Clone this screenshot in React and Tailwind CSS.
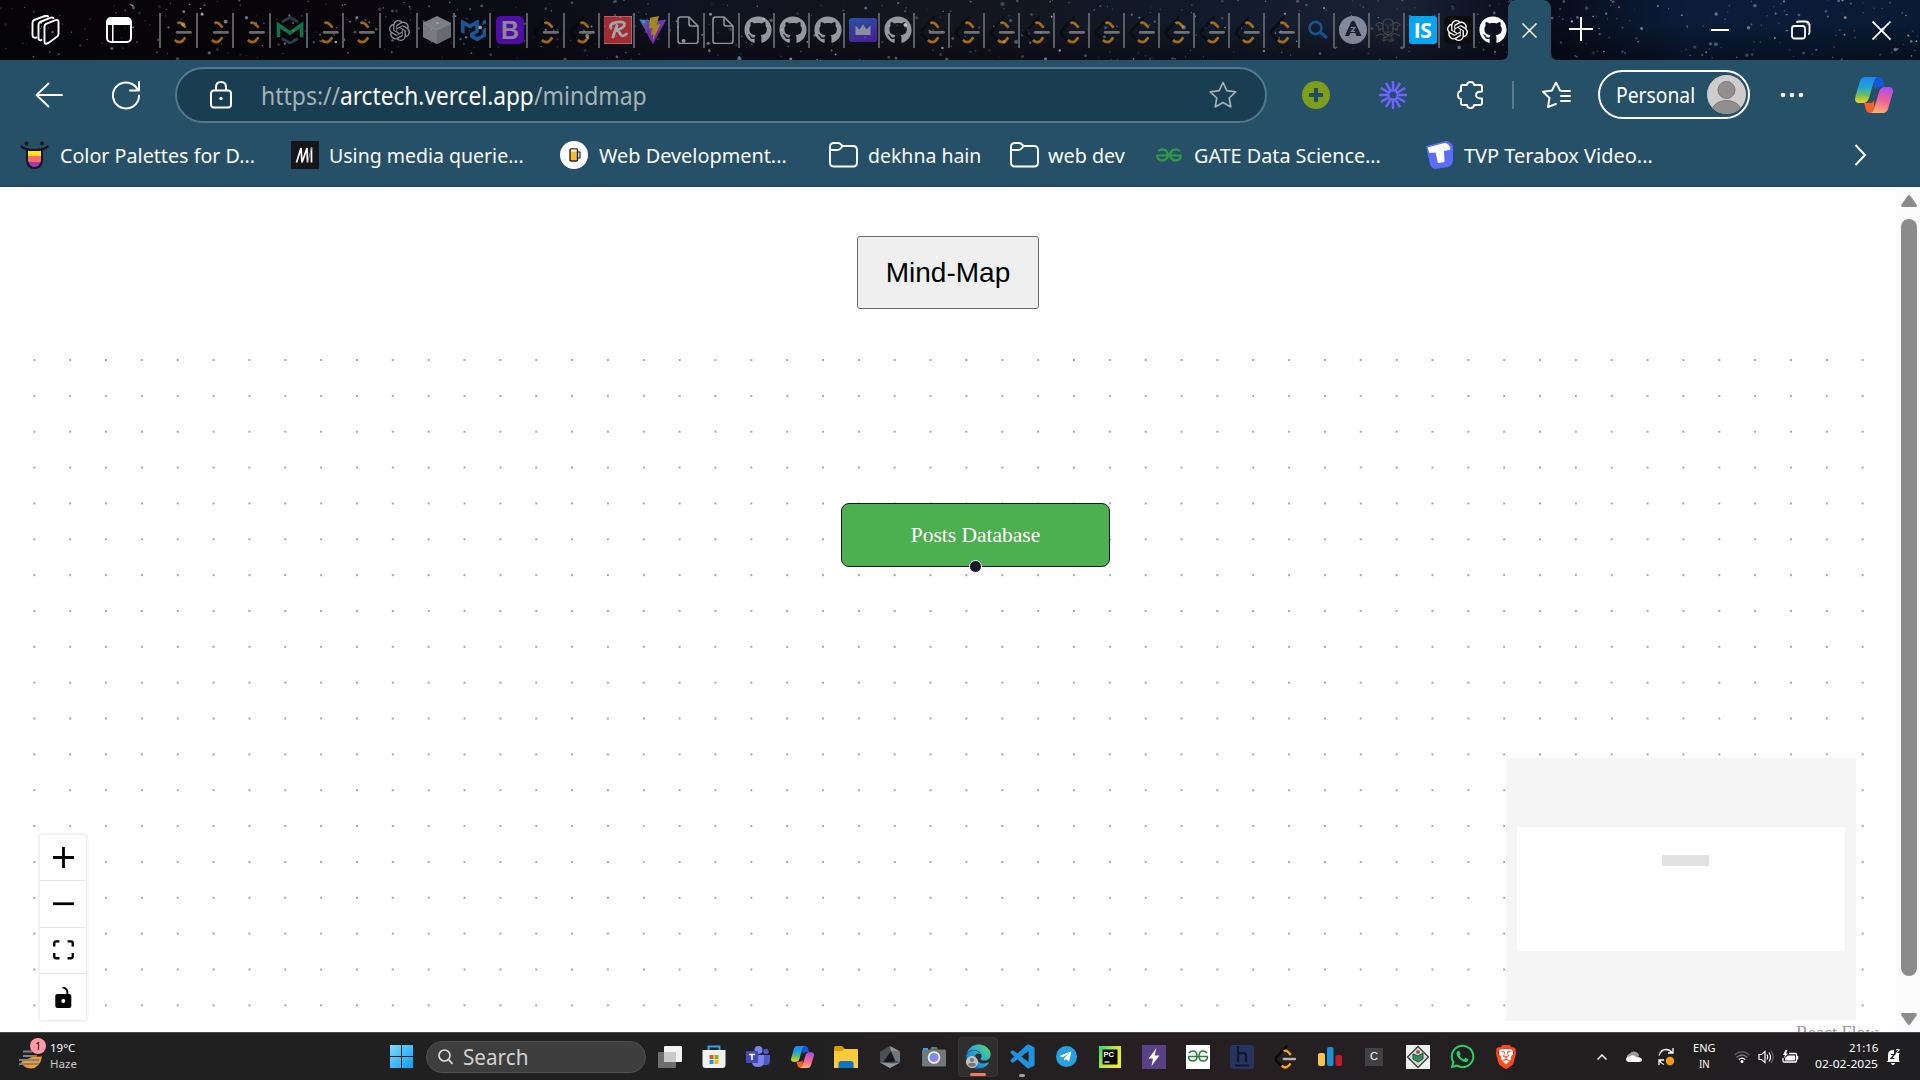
import { useLayoutEffect, useRef } from 'react';
import { SiOpenai, SiMailtrap, SiMui, SiGeeksforgeeks } from 'react-icons/si';
import { FaGithub, FaWhatsapp, FaTelegramPlane, FaEdge } from 'react-icons/fa';
import { FaBrave } from 'react-icons/fa6';
import { BiLogoVisualStudio } from 'react-icons/bi';

/* One line of text, condensed or widened so that it fills its box exactly. */
function Fit({ className, children }) {
  const ref = useRef(null);
  useLayoutEffect(() => {
    const box = ref.current;
    const span = box.firstChild;
    span.style.transform = `scaleX(${box.offsetWidth / span.offsetWidth})`;
  }, [children]);
  return (
    <span ref={ref} className={`block shrink-0 whitespace-pre ${className}`}>
      <span className="inline-block origin-left">{children}</span>
    </span>
  );
}

/* ---------- star field behind the tab strip ---------- */
function makeStars() {
  let s = 77;
  const rnd = () => {
    s = (s * 16807) % 2147483647;
    return s / 2147483647;
  };
  const tints = ['#8fa5cf', '#c9b9c4', '#7c92c4', '#b88f86', '#6d8fae', '#d9deea'];
  return Array.from({ length: 620 }, () => ({
    x: rnd() * 1920,
    y: rnd() * 60,
    r: 0.5 + rnd() * rnd() * 1.7,
    o: 0.18 + rnd() * 0.6,
    c: tints[Math.floor(rnd() * tints.length)],
  }));
}
const STARS = makeStars();

function Sky() {
  return (
    <svg className="absolute inset-0" width="1920" height="60" viewBox="0 0 1920 60">
      <defs>
        <linearGradient id="sky">
          <stop offset="0" stopColor="#050305" />
          <stop offset=".18" stopColor="#08060b" />
          <stop offset=".35" stopColor="#0f1220" />
          <stop offset=".5" stopColor="#14161f" />
          <stop offset=".62" stopColor="#101a29" />
          <stop offset=".73" stopColor="#192236" />
          <stop offset=".8" stopColor="#080b18" />
          <stop offset=".88" stopColor="#0b1d3a" />
          <stop offset="1" stopColor="#091a33" />
        </linearGradient>
        <linearGradient id="skyShade" x1="0" x2="0" y1="0" y2="1">
          <stop offset=".4" stopColor="#000" stopOpacity="0" />
          <stop offset="1" stopColor="#04040a" stopOpacity=".5" />
        </linearGradient>
      </defs>
      <rect width="1920" height="60" fill="url(#sky)" />
      <rect width="1920" height="60" fill="url(#skyShade)" />
      {STARS.map((s, i) => (
        <circle key={i} cx={s.x} cy={s.y} r={s.r} fill={s.c} opacity={s.o} />
      ))}
    </svg>
  );
}

/* ---------- favicons ---------- */
const Leet = ({ size = 28, dark = '#05070b', bar = '#a9a9a9' }) => (
  <svg width={size} height={size} viewBox="0 0 24 24" fill="none" strokeLinecap="round" strokeWidth="2.3">
    <path d="M12.6 1.4 2.4 12.4q-1.400 1.700 0 3.400l4.800 5" stroke={dark} />
    <path d="M9.800 6.300q2-1.400 4 .4l3 3.200" stroke="#ffa116" strokeLinecap="butt" />
    <path d="M7.600 20.600q3.600 3.400 6.600.6l2.400-2.800" stroke="#ffa116" strokeLinecap="butt" />
    <path d="M9.600 14H21" stroke={bar} />
  </svg>
);

const Cube = () => (
  <svg width="28" height="28" viewBox="0 0 28 28">
    <path d="M14 0 28 7v14l-14 7L0 21V7z" fill="#c4c6c9" />
    <path d="M14 14 28 7v14l-14 7z" fill="#a4a7aa" />
    <path d="M14 14 0 7v14l14 7z" fill="#bfc1c3" />
    <path d="M0 7l14 7 14-7" fill="none" stroke="#e4e6e8" strokeWidth=".7" />
  </svg>
);

const BootstrapB = () => (
  <span className="flex size-7 items-center justify-center rounded-[5px] bg-[#7a12fb] font-['Liberation_Sans'] text-[25px] leading-none font-bold text-[#dcd0f0]">
    B
  </span>
);

const ScriptR = () => (
  <svg width="28" height="28" viewBox="0 0 28 28" fill="none" stroke="#fff" strokeLinecap="round" strokeLinejoin="round">
    <rect width="28" height="28" fill="#ff3d3f" />
    <path d="M13 9.500 9 21M7 12Q5 8.500 10 7 18 4.500 20.500 7.500 21 12 12.500 14q2.500 1 4 4.500 2 3 6-.5" strokeWidth="2.900" />
  </svg>
);

const Vite = () => (
  <svg width="28" height="28" viewBox="0 0 28 28">
    <defs>
      <linearGradient id="viteA" x1="0" y1="0" x2="1" y2="1">
        <stop offset="0" stopColor="#41d1ff" />
        <stop offset=".6" stopColor="#bd34fe" />
      </linearGradient>
    </defs>
    <path d="M.5 3.500 14 28 27.500 3.500l-8 1.300z" fill="url(#viteA)" />
    <path d="M.5 3.500 10 5v9l4 14z" fill="url(#viteA)" />
    <path d="M20 0 11 1.800 10 12.500l3.300-.6L12 19l2.500-.8L13.500 25 21.500 8l-4 .8z" fill="#ffd028" />
  </svg>
);

const Doc = () => (
  <svg width="28" height="28" viewBox="0 0 28 28" fill="none" stroke="#e8e8e8" strokeWidth="1.500" strokeLinejoin="round">
    <path d="M6.500 1H15l9 9v15q0 2.500-2.500 2.500h-15q-2.500 0-2.500-2.500V3.500Q4 1 6.500 1z" />
    <path d="M15 1v7q0 2 2 2h7" />
  </svg>
);

const Crown = () => (
  <svg width="28" height="28" viewBox="0 0 28 28">
    <defs>
      <linearGradient id="crownBg" x1="0" y1="0" x2=".4" y2="1">
        <stop offset="0" stopColor="#2d7df0" />
        <stop offset="1" stopColor="#6c2fe0" />
      </linearGradient>
    </defs>
    <rect y="2" width="28" height="24" rx="3" fill="url(#crownBg)" />
    <path d="M6.500 19V9.500l4 4L14 8.500l3.500 5 4-4V19z" fill="#d5d9ee" />
  </svg>
);

const Magnifier = () => (
  <svg width="28" height="28" viewBox="0 0 28 28" fill="none" stroke="#1c78c9" strokeWidth="2.500">
    <circle cx="11.500" cy="12" r="6" />
    <path d="m16 16 7 6" strokeWidth="3" />
  </svg>
);

const LetterA = () => (
  <svg width="28" height="28" viewBox="0 0 28 28">
    <circle cx="14" cy="14" r="14" fill="#c3cbdb" />
    <path d="M6 20 12 6q2-2.500 4 0l6.500 14h-5l-1.200-3h-4.800L10 20z" fill="#1c2436" />
    <path d="M12 11.500h4l-3.500 4H16" fill="none" stroke="#c3cbdb" strokeWidth="1.200" />
  </svg>
);

const Emblem = () => (
  <svg className="opacity-70" width="28" height="28" viewBox="0 0 28 28" fill="none" stroke="#8a7c66" strokeWidth="1.200">
    <path d="M9 8q0-5 5-5t5 5v5q0 5-5 6-5-1-5-6z" />
    <path d="M11 9h2.500M15 9h2.500M14 10v4M11.500 16h5M9 8Q4 5 2 9q3 0 3 5l4-2M19 8q5-3 7 1-3 0-3 5l-4-2M2 20q6-4 8 0t4-1q2 3 4 0t8 1M7 24h14M10 21v5M18 21v5" />
  </svg>
);

const IS = () => (
  <span className="flex size-7 items-center justify-center rounded-[3px] bg-[#08a6f0] font-['Open_Sans','Noto_Sans'] text-[21px] leading-none font-bold tracking-tight text-white">
    IS
  </span>
);

const Gpt = () => (
  <span className="flex size-7 items-center justify-center rounded-[5px] bg-[#0d0d0e] text-white">
    <SiOpenai size={21} />
  </span>
);

const Mail = () => (
  <svg width="28" height="28" viewBox="0 0 28 28" fill="none" strokeWidth="3">
    <path d="M6 6 14 1.500 22 6M6 22.500l8 4.500 8-4.500" stroke="#4a5570" />
    <path d="M2.500 21V9L14 17 25.500 9v12" stroke="#12b878" strokeWidth="3.600" />
  </svg>
);

const FAVICONS = {
  leet: <Leet />,
  mail: <Mail />,
  openai: <SiOpenai size={21} className="text-[#dcdcdc]" />,
  cube: <Cube />,
  mui: <SiMui size={25} className="text-[#1e88e5]" />,
  boot: <BootstrapB />,
  r: <ScriptR />,
  vite: <Vite />,
  doc: <Doc />,
  git: <FaGithub size={28} className="text-[#e9e9ee]" />,
  crown: <Crown />,
  search: <Magnifier />,
  a: <LetterA />,
  emblem: <Emblem />,
};
const WIDE_TABS = ['leet', 'leet', 'leet', 'mail', 'leet', 'leet', 'openai', 'cube', 'mui', 'boot', 'leet'];
const NARROW_TABS = [
  'leet', 'r', 'vite', 'doc', 'doc', 'git', 'git', 'git', 'crown', 'git',
  'leet', 'leet', 'leet', 'leet', 'leet', 'leet', 'leet', 'leet', 'leet', 'leet', 'leet',
  'search', 'a', 'emblem',
];

function TabCell({ className, children }) {
  return (
    <div className={`flex h-[35px] shrink-0 items-center justify-center border-l-2 border-[#5c5d62] pl-[3px] ${className}`}>
      {children}
    </div>
  );
}

function TabStrip() {
  return (
    <div className="relative h-[60px] shrink-0 overflow-hidden bg-[#08090f]">
      <Sky />
      <div className="relative flex h-[60px] items-center text-white">
        <svg className="ml-[31px] shrink-0" width="29" height="30" viewBox="0 0 29 30" fill="none" stroke="#fff" strokeWidth="1.900" strokeLinejoin="round" strokeLinecap="round">
          <path d="M13.500 11.500q0-2 1.500-2.700l9.500-3.600q3-1 3 1.500v12q0 2-1.500 3l-9 6.500q-3.500 1.500-3.500-1.500z" />
          <path d="M10.500 25Q7.500 26 7.500 23V10q0-2 1.500-3l11-4.300q1.500-.5 2.500.5" />
          <path d="M5.500 22.500Q1.500 23.500 1.500 20V8q0-2 1.500-3l11-4q2-.6 3 .5" />
        </svg>
        <svg className="ml-[46px] shrink-0" width="26" height="26" viewBox="0 0 26 26">
          <rect x="1" y="1" width="24" height="24" rx="4" fill="none" stroke="#fff" strokeWidth="2" />
          <path d="M1 8V4.500Q1 1 4.500 1h17Q25 1 25 4.500V8zM6 8h1.500v17H6z" fill="#fff" />
        </svg>
        <div className="ml-[27px] flex items-center">
          {WIDE_TABS.map((k, i) => (
            <TabCell key={i} className="w-[36.700px]">
              <span className="opacity-[.62]">{FAVICONS[k]}</span>
            </TabCell>
          ))}
          {NARROW_TABS.map((k, i) => (
            <TabCell key={i} className="w-[35px]">
              <span className="opacity-[.62]">{FAVICONS[k]}</span>
            </TabCell>
          ))}
          <TabCell className="w-[35px]"><IS /></TabCell>
          <TabCell className="w-[35px]"><Gpt /></TabCell>
          <TabCell className="w-[35px]"><FaGithub size={28} /></TabCell>
        </div>
        <div className="relative flex h-[60px] w-[43px] shrink-0 items-center justify-center rounded-t-[8px] bg-[#265068] pl-[1px]">
          <svg className="absolute bottom-0 -left-[7px]" width="7" height="7"><path d="M7 0v7H0q7 0 7-7z" fill="#265068" /></svg>
          <svg className="absolute -right-[7px] bottom-0" width="7" height="7"><path d="M0 0v7h7Q0 7 0 0z" fill="#265068" /></svg>
          <svg width="15" height="15" stroke="#fff" strokeWidth="1.500"><path d="m.5.5 14 14m0-14-14 14" /></svg>
        </div>
        <svg className="-mt-[2px] ml-[18px] shrink-0" width="24" height="24" stroke="#fff" strokeWidth="2"><path d="M12 0v24M0 12h24" /></svg>
        <svg className="ml-[118px] shrink-0" width="18" height="4"><path d="M0 2h18" stroke="#fff" strokeWidth="2" /></svg>
        <svg className="ml-[62px] shrink-0" width="20" height="20" fill="none" stroke="#fff" strokeWidth="1.800">
          <rect x="1" y="6" width="13" height="12.500" rx="2.500" />
          <path d="M5.500 2.500Q6 1.500 8 1.500h6Q18.500 1.500 18.500 6v6q0 2-1.200 2.500" />
        </svg>
        <svg className="ml-[61px] shrink-0" width="19" height="19" stroke="#fff" strokeWidth="1.800"><path d="m.5.5 18 18m0-18-18 18" /></svg>
      </div>
    </div>
  );
}

/* ---------- toolbar ---------- */
const Copilot = ({ w, h }) => (
  <svg className="shrink-0" width={w} height={h} viewBox="0 0 38 36">
    <defs>
      <linearGradient id="cpA" x1="0" y1="0" x2="0" y2="1">
        <stop offset="0" stopColor="#1c86f2" />
        <stop offset=".4" stopColor="#21a6d8" />
        <stop offset=".7" stopColor="#6fbf5a" />
        <stop offset="1" stopColor="#fbd21c" />
      </linearGradient>
      <linearGradient id="cpB" x1=".6" y1="0" x2=".4" y2="1">
        <stop offset="0" stopColor="#a750ea" />
        <stop offset=".5" stopColor="#f2609a" />
        <stop offset="1" stopColor="#fdb06a" />
      </linearGradient>
    </defs>
    <path d="M18 0h6q3 0 4 3l2 7h-6q-3 0-4 3z" fill="#1558d6" />
    <path d="M20 36h-5q-3 0-4-3l-2-7h6q3 0 4-3z" fill="#f4622c" />
    <path d="M10 0h13q-3 0-4 4l-5 17q-1.500 5-6 5H4q-5 0-3.700-6L5 4q1.500-4 5-4z" fill="url(#cpA)" />
    <path d="M28 36H15q3 0 4-4l5-17q1.500-5 6-5h4q5 0 3.700 6L33 32q-1.500 4-5 4z" fill="url(#cpB)" />
  </svg>
);

const STAR = 'M14 1.500 17.800 9.600l8.900 1.200-6.500 6.200 1.600 8.900L14 21.600l-7.800 4.300L7.800 17 1.300 10.800l8.900-1.200z';

function Toolbar() {
  return (
    <div className="flex h-[69px] shrink-0 items-center text-white">
      <svg className="ml-[35px] shrink-0" width="28" height="26" fill="none" stroke="#fff" strokeWidth="1.900" strokeLinecap="round" strokeLinejoin="round">
        <path d="M27 13H1.500M13.500 1.500 1.500 13l12 11.500" />
      </svg>
      <svg className="ml-[48px] shrink-0" width="30" height="30" fill="none" stroke="#fff" strokeWidth="2" strokeLinecap="round" strokeLinejoin="round">
        <path d="M27 10.500A13 13 0 1 0 28 15.500M28 2v8.500h-9" />
      </svg>
      <div className="ml-[34px] flex h-[56px] w-[1092px] shrink-0 items-center rounded-full border-2 border-[#55788b] bg-[#193e52]">
        <svg className="ml-[33px] shrink-0" width="22" height="28" fill="none" stroke="#fff" strokeWidth="2">
          <rect x="1" y="9.500" width="20" height="17" rx="3" />
          <path d="M6 9.500V6q0-5 5-5t5 5v3.500" />
          <circle cx="11" cy="17.500" r="1.700" fill="#fff" stroke="none" />
        </svg>
        <div className="ml-[29px] flex text-[25px] leading-[32px] text-[#a6b1b6]">
          <Fit className="w-[79px]">https://</Fit>
          <Fit className="w-[194px] text-white">arctech.vercel.app</Fit>
          <Fit className="w-[113px]">/mindmap</Fit>
        </div>
        <svg className="ml-[562px] shrink-0" width="28" height="28" fill="none" stroke="#a3b0b6" strokeWidth="1.700" strokeLinejoin="round"><path d={STAR} /></svg>
      </div>
      <svg className="ml-[35px] shrink-0" width="28" height="28">
        <circle cx="14" cy="14" r="14" fill="#7c9e1b" />
        <path d="M14 7v14M7 14h14" stroke="#1f4b60" strokeWidth="4" />
      </svg>
      <svg className="ml-[49px] shrink-0" width="28" height="28" viewBox="-14 -14 28 28" stroke="#6f64ff" strokeWidth="2.500">
        {Array.from({ length: 12 }, (_, i) => (
          <path key={i} d="M0-5V-14" transform={`rotate(${i * 30})`} />
        ))}
        <circle r="4.500" fill="none" strokeWidth="2" />
      </svg>
      <svg className="ml-[50px] shrink-0" width="27" height="28" fill="none" stroke="#fff" strokeWidth="1.900" strokeLinejoin="round">
        <path d="M4 5.500Q4 4 5.500 4H10q0-3 3.500-3T17 4h6q2 0 2 2v4.500q-6 0-6 3.500t6 3.500V22q0 2-2 2h-6q0 3-3.500 3T10 24H5.500Q4 24 4 22.500V18q-3 0-3-4t3-4z" />
      </svg>
      <span className="ml-[28px] h-[28px] w-[2px] shrink-0 bg-[#5a7b8d]" />
      <svg className="ml-[28px] shrink-0" width="29" height="28" fill="none" stroke="#fff" strokeWidth="1.900" strokeLinecap="round" strokeLinejoin="round">
        <path d="M18 9.500 14 1.500 10 9.500l-9 1.200L7.500 17 6 26l8-3M19.500 10H28M19 15h9M19 20h9" />
      </svg>
      <div className="ml-[27px] flex h-[49px] w-[152px] shrink-0 items-center rounded-full border-2 border-white">
        <Fit className="ml-[16px] w-[79px] text-[21px] leading-[28px]">Personal</Fit>
        <svg className="ml-[12px] shrink-0" width="39" height="39">
          <defs><clipPath id="av"><circle cx="19.500" cy="19.500" r="19.500" /></clipPath></defs>
          <circle cx="19.500" cy="19.500" r="19.500" fill="#cfcdcb" />
          <g clipPath="url(#av)" fill="#918f8d" stroke="#7c7a78">
            <circle cx="19.500" cy="15" r="8.500" />
            <ellipse cx="19.500" cy="36" rx="14.500" ry="10.500" />
          </g>
        </svg>
      </div>
      <svg className="ml-[30px] shrink-0" width="24" height="6" fill="#fff"><circle cx="3" cy="3" r="2.300" /><circle cx="12" cy="3" r="2.300" /><circle cx="21" cy="3" r="2.300" /></svg>
      <span className="ml-[51px]"><Copilot w={38} h={36} /></span>
    </div>
  );
}

const Folder = () => (
  <svg className="shrink-0" width="29" height="26" fill="none" stroke="#fff" strokeWidth="1.900" strokeLinejoin="round">
    <path d="M1 5q0-4 4-4h4q2 0 3.500 2l1 1H24q4 0 4 4v12.500q0 4-4 4H5q-4 0-4-4zM1 8h7.500Q10.500 8 12 6l1.500-2" />
  </svg>
);

function Bookmarks() {
  return (
    <div className="flex h-[58px] shrink-0 items-center border-b-2 border-[#1f4a62] pb-[4px] text-[20.500px] leading-[28px] text-[#fafcfd]">
      <svg className="ml-[20px] shrink-0" width="29" height="28">
        <path d="M6 8h17v12q-1 8-8.500 8T6 20z" fill="#1c1420" />
        <path d="M8 9h13v6H8z" fill="#ffe51f" />
        <path d="M8 15h13v4q0 1-.5 2h-12Q8 20 8 19z" fill="#ff6b6b" />
        <path d="M8.500 21h12q-1.500 5-6 5t-6-5z" fill="#a03cb0" />
        <path d="M1.500 5.500q3 3.500 13 3.500t13-3.500" fill="none" stroke="#15141a" strokeWidth="2.200" strokeLinecap="round" />
        <circle cx="6.500" cy="2.500" r="2" fill="#15141a" /><circle cx="22" cy="2.500" r="2" fill="#15141a" />
      </svg>
      <Fit className="ml-[11px] w-[195px]">Color Palettes for D...</Fit>
      <svg className="ml-[36px] shrink-0" width="28" height="28">
        <rect width="28" height="28" fill="#15151a" />
        <path d="M5.500 21.500 10 7l1 14.500L16 7l.5 14.500M20.500 6.500v15" fill="none" stroke="#fff" strokeWidth="1.700" strokeLinejoin="bevel" />
        <path d="M16.500 21.500 20.500 7" stroke="#9a9a9d" strokeWidth="1" />
      </svg>
      <Fit className="ml-[10px] w-[195px]">Using media querie...</Fit>
      <svg className="ml-[36px] shrink-0" width="28" height="28">
        <circle cx="14" cy="14" r="14" fill="#fff" />
        <rect x="10" y="8" width="7.500" height="12" rx="1" fill="#f6bd2b" stroke="#222" strokeWidth="1.400" />
        <path d="M17.500 11h2.500v6h-2.500" fill="none" stroke="#222" strokeWidth="1.200" />
        <path d="M11 8.500h5.500v2H11z" fill="#fff" />
      </svg>
      <Fit className="ml-[11px] w-[188px]">Web Development...</Fit>
      <span className="ml-[42px]"><Folder /></span>
      <Fit className="ml-[10px] w-[113px]">dekhna hain</Fit>
      <span className="ml-[29px]"><Folder /></span>
      <Fit className="ml-[9px] w-[77px]">web dev</Fit>
      <SiGeeksforgeeks size={26} className="ml-[31px] shrink-0 text-[#2f9a44]" />
      <Fit className="ml-[12px] w-[187px]">GATE Data Science...</Fit>
      <svg className="ml-[44px] shrink-0" width="29" height="28">
        <path d="m1 5 20-5q4 0 7 5v15q-1 5-5 6l-13 2q-4-1-5-5z" fill="#5b6cf5" />
        <path d="m2.500 6.500 17-4.500q5 0 6 6.500l-6.500 1.500.5 11-6.500 1-2.500-10.500-6 .5z" fill="#fff" />
      </svg>
      <Fit className="ml-[10px] w-[189px]">TVP Terabox Video...</Fit>
      <svg className="ml-[201px] shrink-0" width="13" height="22" fill="none" stroke="#fff" strokeWidth="2"><path d="m1.500 1 9.500 10-9.500 10" /></svg>
    </div>
  );
}

/* ---------- page ---------- */
function Controls() {
  const btn = 'flex h-[46.300px] items-center justify-center border-b border-[#e6e6e6] bg-[#fefefe] last:border-b-0';
  return (
    <div className="absolute top-[509px] left-[40px] flex w-[46px] flex-col shadow-[0_0_3px_1px_rgba(0,0,0,0.1)]">
      <div className={btn}><svg width="21" height="21" viewBox="0 0 32 32"><path d="M32 18.133H18.133V32h-4.266V18.133H0v-4.266h13.867V0h4.266v13.867H32z" /></svg></div>
      <div className={btn}><svg width="21" height="4" viewBox="0 0 32 5"><path d="M0 0h32v4.2H0z" /></svg></div>
      <div className={btn}><svg width="21" height="20" viewBox="0 0 32 30"><path d="M3.692 4.63c0-.53.4-.938.939-.938h5.215V0H4.708C2.13 0 0 2.054 0 4.63v5.216h3.692V4.631zM27.354 0h-5.2v3.692h5.17c.53 0 .984.4.984.939v5.215H32V4.631A4.624 4.624 0 0027.354 0zm.954 24.83c0 .532-.4.94-.939.94h-5.215v3.768h5.215c2.577 0 4.631-2.13 4.631-4.707v-5.139h-3.692v5.139zm-23.677.94c-.531 0-.939-.4-.939-.94v-5.138H0v5.139c0 2.577 2.13 4.707 4.708 4.707h5.138V25.77H4.631z" /></svg></div>
      <div className={btn}><svg className="mt-[1px]" width="17" height="21" viewBox="0 0 25 32"><path d="M21.333 10.667H19.81V7.619C19.81 3.429 16.38 0 12.19 0c-4.114 1.828-1.37 2.133.305 2.438 1.676.305 4.42 2.59 4.42 5.181v3.048H3.047A3.056 3.056 0 000 13.714v15.238A3.056 3.056 0 003.048 32h18.285a3.056 3.056 0 003.048-3.048V13.714a3.056 3.056 0 00-3.048-3.047zM12.19 24.533a3.056 3.056 0 01-3.047-3.047 3.056 3.056 0 013.047-3.048 3.056 3.056 0 013.048 3.048 3.056 3.056 0 01-3.048 3.047z" /></svg></div>
    </div>
  );
}

function Page() {
  return (
    <div className="flex h-[845px] shrink-0 overflow-hidden bg-white">
      <div className="flex w-[1896px] flex-col">
        <div className="flex h-[139px] shrink-0 justify-center pt-[49px]">
          <button className="h-[73px] w-[182px] rounded-[3px] border border-[#6b6b6b] bg-[#efefef] font-['Liberation_Sans',sans-serif] text-[28px] leading-none text-black">
            Mind-Map
          </button>
        </div>
        <div className="relative grow overflow-hidden">
          <svg className="absolute inset-0" width="1896" height="706">
            <defs>
              <pattern id="dots" x="16.400" y="16.100" width="35.850" height="35.850" patternUnits="userSpaceOnUse">
                <circle cx="17.925" cy="17.925" r="1.050" fill="#929297" />
              </pattern>
            </defs>
            <rect width="1896" height="706" fill="url(#dots)" />
          </svg>
          <div className="absolute top-[177px] left-[841px] flex h-[64px] w-[269px] items-center justify-center rounded-[8px] border border-[#1a192b] bg-[#4caf50] pt-[1px] font-['Liberation_Serif',serif] text-[21.500px] leading-none text-white">
            Posts Database
            <span className="absolute -bottom-[7px] left-[127px] size-[13px] rounded-full border border-white bg-[#1a192b]" />
          </div>
          <Controls />
          <div className="absolute top-[432px] left-[1506px] h-[263px] w-[350px] bg-[#f5f5f5]">
            <div className="mt-[69px] ml-[11px] h-[124px] w-[328px] bg-white pt-[28px] pl-[145px]">
              <div className="h-[11px] w-[47px] rounded-t-[1px] bg-[#e2e2e2]" />
            </div>
          </div>
          <div className="absolute top-[693px] left-[1791px] h-[30px] w-[92px] bg-white/50 pt-[4px] pl-[5px] font-['Liberation_Serif',serif] text-[18px] leading-[21px] whitespace-nowrap text-[#999]">
            React Flow
          </div>
        </div>
      </div>
      <div className="flex w-[24px] flex-col items-center bg-[#fcfcfc] pt-[8px] pl-[2px]">
        <svg className="shrink-0" width="16" height="12" fill="#8b8b8b"><path d="M6.500 1q1.500-2 3 0l6 8.500q1 2.500-1 2.500h-13q-2 0-1-2.500z" /></svg>
        <div className="mt-[12px] h-[757px] w-[16px] shrink-0 rounded-full bg-[#8b8b8b]" />
        <svg className="mt-[37px] shrink-0" width="16" height="12" fill="#8b8b8b"><path d="M6.500 11q1.500 2 3 0l6-8.500q1-2.500-1-2.500h-13q-2 0-1 2.500z" /></svg>
      </div>
    </div>
  );
}

/* ---------- taskbar ---------- */
const APPS = [
  <svg width="24" height="22"><rect x="6" width="18" height="16" rx="1" fill="#f2f2f2" /><rect y="6" width="18" height="16" rx="1" fill="#6d6d6d" /><path d="M6 6h12v10H6z" fill="#c9c9c9" /></svg>,
  <svg width="24" height="24"><path d="M6.500 6V1.500h11V6" fill="none" stroke="#21a8ea" strokeWidth="2" /><path d="M.5 5h23v15q0 3-3 3h-17q-3 0-3-3z" fill="#f1f1f1" /><path d="M7.500 10h4v4h-4z" fill="#f25022" /><path d="M12.500 10h4v4h-4z" fill="#7fba00" /><path d="M7.500 15h4v4h-4z" fill="#00a4ef" /><path d="M12.500 15h4v4h-4z" fill="#ffb900" /></svg>,
  <svg width="24" height="22"><circle cx="20" cy="5.500" r="2.700" fill="#5059c9" /><circle cx="12.500" cy="4" r="4" fill="#7b83eb" /><path d="M16 9h8v6q0 4-4 4h-4z" fill="#5059c9" /><path d="M6 9h12v7q0 5-6 5t-6-5z" fill="#7b83eb" /><rect y="5" width="12" height="12" rx="1" fill="#4549b5" /><path d="M3 8.500h6M6 8.500V14" stroke="#fff" strokeWidth="1.600" /></svg>,
  <Copilot w={23} h={22} />,
  <svg width="24" height="22"><path d="M0 2q0-2 2-2h6l3 3h13v6H0z" fill="#d99c0b" /><path d="M0 5h8l3-2h11q2 0 2 2v17H0z" fill="#ffca3a" /><path d="M4.500 22v-4.500q0-2.500 2.500-2.500h10q2.500 0 2.500 2.500V22z" fill="#1173c4" /></svg>,
  <svg width="20" height="22"><path d="m10 0 10 5.500v11L10 22 0 16.500v-11z" fill="#4a5056" /><path d="m10 0 10 5.500-9-.5zM0 16.500 10 22l10-5.500-7 1z" fill="#92989e" /><path d="M11 5 3.500 16H13q3 0 2-4z" fill="#15181b" /><path d="M11 5 20 5.500v11l-5-2z" fill="#70767c" /></svg>,
  <svg width="24" height="20"><rect y="2.500" width="24" height="17" rx="1.500" fill="#70777d" /><path d="M8 2.500 9.500 0h5L16 2.500z" fill="#70777d" /><rect x="1" y="1" width="5" height="2" fill="#2ca7e8" /><circle cx="12" cy="10.500" r="6.300" fill="#f1f1f4" /><circle cx="12" cy="10.500" r="4.600" fill="url(#lens)" /></svg>,
  <span className="relative flex h-[40px] w-[40px] items-center justify-center rounded-[4px] border border-[#383537] bg-[#302d2f]">
    <FaEdge size={25} fill="url(#edge)" />
    <span className="absolute bottom-[8px] left-[7px] size-[12px] overflow-hidden rounded-full border border-[#cfcfcf] bg-[#bdbab8]"><span className="mx-auto mt-[1px] block size-[4px] rounded-full bg-[#777]" /><span className="mx-auto mt-px block h-[5px] w-[8px] rounded-full bg-[#777]" /></span>
    <span className="absolute bottom-0 left-[11px] h-[3px] w-[16px] rounded-full bg-[#f27c5f]" />
  </span>,
  <span className="relative flex h-[40px] items-center"><BiLogoVisualStudio size={29} className="text-[#1f93e0]" /><span className="absolute bottom-0 left-[11px] h-[3px] w-[6px] rounded-full bg-[#9d9b9c]" /></span>,
  <span className="flex size-[21px] items-center justify-center rounded-full bg-[#2aa1de] text-white"><FaTelegramPlane size={13} className="-ml-[2px]" /></span>,
  <svg width="22" height="22"><rect width="22" height="22" fill="url(#pc)" /><rect x="3.500" y="3.500" width="15" height="15" fill="#060606" /><text x="4.500" y="11" fill="#fff" fontSize="7.500" fontWeight="700" fontFamily="Liberation Sans">PC</text><path d="M5.500 16h5" stroke="#fff" strokeWidth="1.300" /></svg>,
  <svg width="24" height="24"><rect width="24" height="24" fill="#5a4085" /><path d="m14.500 3-8 10.500H11L9.500 21l8-10.500h-5z" fill="#fff" /></svg>,
  <svg width="24" height="24" fill="none" stroke="#2f7d3f" strokeWidth="1.500"><rect width="24" height="24" fill="#fff" stroke="none" /><path d="M2 11.500h20M3 8q1.500-2 4-2 4 0 4 5t-4 5q-4.500 0-4.500-4.500M21 8q-1.500-2-4-2-4 0-4 5t4 5q4.500 0 4.500-4.500" /></svg>,
  <span className="flex size-[24px] items-center justify-center rounded-[3px] bg-[#27345f]"><svg width="24" height="24" fill="none" stroke="#12172b" strokeWidth="2.200"><path d="M8 1v16M8 9q8-3 8 2v6M5 20.500h14" /></svg></span>,
  <Leet size={24} dark="#070707" bar="#b3b3b3" />,
  <svg width="24" height="20"><rect y="6" width="7" height="13" rx="2" fill="#f4c44f" /><rect x="9" y="0" width="6.500" height="19" rx="2" fill="#1e8fd0" /><rect x="17.500" y="8" width="6.500" height="11" rx="2" fill="#bd1e2d" /></svg>,
  <span className="flex size-[18px] items-center justify-center bg-[#404143] font-['Liberation_Sans'] text-[11px] leading-none text-white">C</span>,
  <svg width="24" height="24"><rect width="24" height="24" fill="#eef0ee" /><path d="m12 1.500 10.500 10.500L12 22.500 1.500 12z" fill="#d5d8d5" stroke="#3a3d3a" strokeWidth="1.300" /><path d="m7 9 5 2 5-3v6l-5 3-5-3z" fill="#3d8a5a" stroke="#1f5138" /><circle cx="12" cy="7" r="2" fill="#8c5c50" /></svg>,
  <FaWhatsapp size={27} className="text-[#25d366]" />,
  <span className="relative flex size-[24px] items-center justify-center"><svg className="absolute" width="16" height="18"><path d="M1 1h14v11l-7 6-7-6z" fill="#fff" /></svg><FaBrave size={24} className="relative text-[#fb4a1c]" /></span>,
];

function Taskbar() {
  return (
    <div className="flex h-[48px] shrink-0 items-center border-t border-[#4a4a4a] bg-[linear-gradient(90deg,#202020_0%,#202020_38%,#251f22_60%,#231f21_80%,#1f1e20_100%)] text-white">
      <svg width="0" height="0" className="absolute">
        <defs>
          <linearGradient id="edge" x1="0" y1="1" x2="1" y2="0"><stop offset="0" stopColor="#1467c4" /><stop offset=".5" stopColor="#22a5dd" /><stop offset="1" stopColor="#66e05c" /></linearGradient>
          <linearGradient id="lens" x1="0" y1="0" x2="1" y2="1"><stop offset="0" stopColor="#3fa7ef" /><stop offset="1" stopColor="#c770e8" /></linearGradient>
          <linearGradient id="pc" x1="0" y1="0" x2="1" y2=".6"><stop offset="0" stopColor="#21d789" /><stop offset=".5" stopColor="#b7e43a" /><stop offset="1" stopColor="#f3ea3a" /></linearGradient>
        </defs>
      </svg>
      <div className="relative ml-[19px] flex h-[47px] w-[27px] shrink-0 items-center">
        <svg width="27" height="34">
          <path d="M2 22Q5 28.500 12 28.500q9-.5 11-12l-10 .5z" fill="#f59a23" />
          <path d="M4 11.500h9M4 16h14M0 20h20M0 24h20" stroke="#7d8288" strokeWidth="2" />
        </svg>
        <span className="absolute top-[5px] left-[11px] flex size-[16px] items-center justify-center rounded-full bg-[#ff99a4] text-[10px] leading-none text-black">1</span>
      </div>
      <div className="ml-[4px] w-[30px] shrink-0 pb-[1px] text-[11.500px] leading-[16px]">
        <Fit className="w-[25px]">19°C</Fit>
        <Fit className="w-[27px] text-[#c8c8c8]">Haze</Fit>
      </div>
      <svg className="ml-[310px] shrink-0" width="23" height="23">
        <defs><linearGradient id="win" x1="0" y1="0" x2="1" y2="1"><stop offset="0" stopColor="#7fdcfb" /><stop offset="1" stopColor="#0a9cf5" /></linearGradient></defs>
        <path d="M0 0h11v11H0zM12 0h11v11H12zM0 12h11v11H0zM12 12h11v11H12z" fill="url(#win)" />
      </svg>
      <div className="ml-[13px] flex h-[32px] w-[220px] shrink-0 items-center rounded-full border border-[#4f4f4f] bg-[#3e3e3e]">
        <svg className="ml-[11px] shrink-0" width="15" height="16" fill="none" stroke="#dcdcdc" strokeWidth="1.700"><circle cx="6.500" cy="6.500" r="5.500" /><path d="m10.500 10.500 4 4.500" /></svg>
        <Fit className="ml-[10px] w-[65px] text-[21px] leading-[28px] text-[#d2d2d2]">Search</Fit>
      </div>
      <div className="ml-[2px] flex shrink-0">
        {APPS.map((icon, i) => (
          <div key={i} className="flex h-[47px] w-[44px] items-center justify-center">{icon}</div>
        ))}
      </div>
      <svg className="ml-[69px] shrink-0" width="10" height="6" fill="none" stroke="#fff" strokeWidth="1.500"><path d="m.5 5.500 4.500-4.500 4.500 4.500" /></svg>
      <svg className="ml-[19px] shrink-0" width="16" height="11"><path d="M2 8q-3-4 2-5.500Q6-.5 10 1q3 1 3 4l-6 4z" fill="#9b9b9b" /><path d="M3 11q-3-.5-3-3 .5-3 4-2.500 3-2.500 5.500 0 1 1 2.500.5 4 .5 4 3-.5 2-3 2z" fill="#fafafa" /></svg>
      <svg className="ml-[16px] shrink-0" width="17" height="18" fill="none" stroke="#fff" strokeWidth="1.300"><path d="M1 7.500Q3 1.500 8 1.500q3.500 0 6 3M15 0v5h-5M6 16.500q-3-1-4.500-4M1 17v-5h5" /><circle cx="12" cy="13" r="4.200" fill="#ff9a0c" stroke="none" /></svg>
      <div className="ml-[17px] flex w-[24px] shrink-0 flex-col items-center pb-[1px] text-[11.500px] leading-[16px]">
        <Fit className="w-[23px]">ENG</Fit>
        <Fit className="w-[11px]">IN</Fit>
      </div>
      <svg className="ml-[18px] shrink-0" width="16" height="12" fill="none"><path d="M.5 4q7.500-6.500 15 0" stroke="#5b5b5b" strokeWidth="1.300" /><path d="M2.500 6.500q5.500-5 11 0" stroke="#7a7a7a" strokeWidth="1.300" /><path d="M4.800 8.600q3.200-3 6.400 0" stroke="#fff" strokeWidth="1.300" /><circle cx="8" cy="10.500" r="1.500" fill="#fff" /></svg>
      <svg className="ml-[8px] shrink-0" width="16" height="14" fill="none" stroke="#fff" strokeWidth="1.200"><path d="M1 4.500h2.500L7 1.500v11L3.500 9.500H1zM9 4.500q1.500 2.500 0 5M11 2.500q3 4.500 0 9" /><path d="M13.200 1q4 6 0 12" stroke="#666" /></svg>
      <svg className="ml-[8px] shrink-0" width="17" height="14" fill="none" stroke="#fff" strokeWidth="1.300"><path d="M7 3.500h6.500q1 0 1 1v6.500q0 1-1 1H2q-1 0-1-1V8" /><path d="M6 5.500h7v5H3V8z" fill="#fff" stroke="none" /><path d="M15.500 6v3.500" strokeWidth="1.500" /><path d="M3.500 0 1 5h2L1.500 8.500 6 3.500H4L5.500 0z" fill="#fff" stroke="none" /></svg>
      <div className="ml-[16px] flex w-[63px] shrink-0 flex-col items-end pb-[1px] text-[11.500px] leading-[16px]">
        <Fit className="w-[29px]">21:16</Fit>
        <Fit className="w-[63px]">02-02-2025</Fit>
      </div>
      <svg className="ml-[8px] shrink-0" width="15" height="16"><path d="M2 12V6q0-4.500 4.500-5H8v4h5v7l1 1H0zM5 14h4q-.5 2-2 2t-2-2z" fill="#fff" /><path d="M5 5.500h3.500L5 9.500h3.500" fill="none" stroke="#222" strokeWidth="1.200" /><path d="M10 .7h3.500L10 4.500h3.500" fill="none" stroke="#fff" /></svg>
    </div>
  );
}

export default function App() {
  return (
    <div className="flex h-[1080px] w-[1920px] flex-col overflow-hidden bg-[#265068] font-['Noto_Sans',sans-serif]">
      <TabStrip />
      <Toolbar />
      <Bookmarks />
      <Page />
      <Taskbar />
    </div>
  );
}
